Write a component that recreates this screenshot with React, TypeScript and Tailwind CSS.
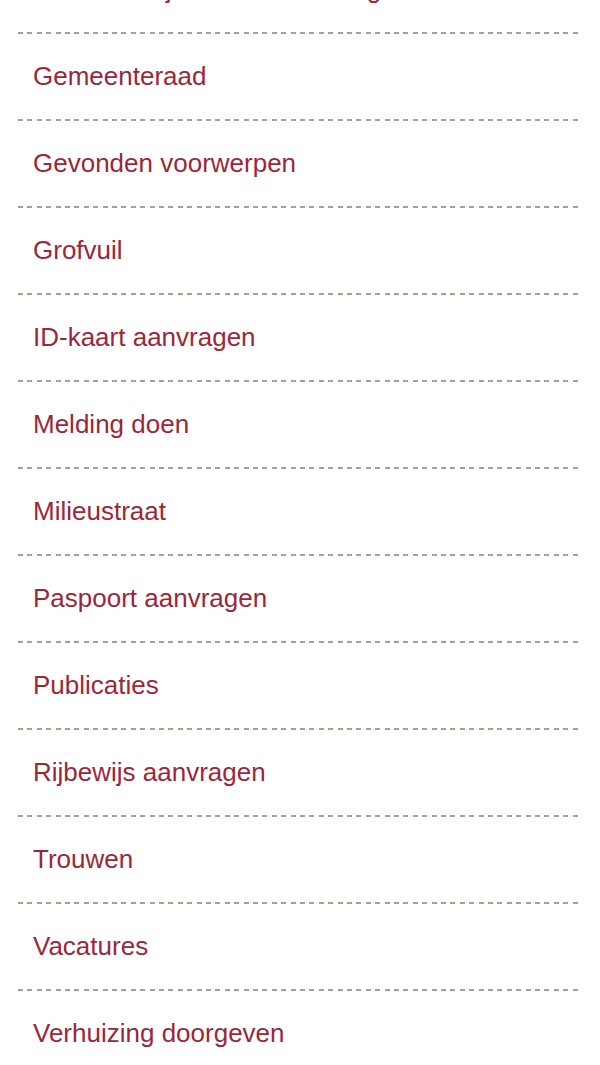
const items = [
  'Gemeentelijke dienstverlening',
  'Gemeenteraad',
  'Gevonden voorwerpen',
  'Grofvuil',
  'ID-kaart aanvragen',
  'Melding doen',
  'Milieustraat',
  'Paspoort aanvragen',
  'Publicaties',
  'Rijbewijs aanvragen',
  'Trouwen',
  'Vacatures',
  'Verhuizing doorgeven',
]

export default function App() {
  return (
    <div className="min-h-[1065px] overflow-hidden bg-white font-['Liberation_Sans',Arial,sans-serif]">
      <ul className="mx-[18px] -mt-[53px]">
        {items.map((item, i) => (
          <li key={item}>
            {i > 0 && (
              <div className="h-[2px] bg-[repeating-linear-gradient(90deg,#a3a391_0_5px,transparent_5px_9.4px)]" />
            )}
            <a
              href="#"
              className="block py-7 pl-[15px] text-[26px] leading-[29px] text-[#9e2639]"
            >
              {item}
            </a>
          </li>
        ))}
      </ul>
    </div>
  )
}
